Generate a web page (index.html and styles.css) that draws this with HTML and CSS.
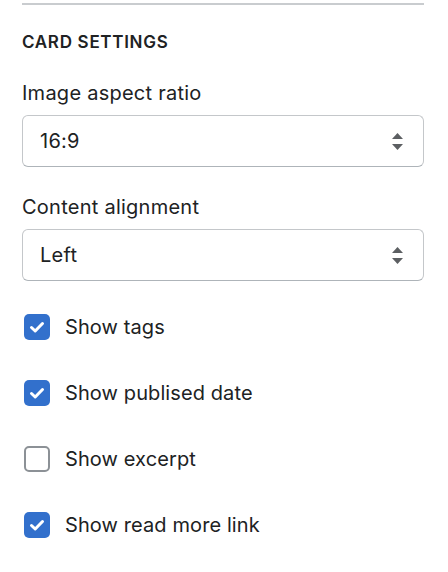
FILE: index.html
```html
<!DOCTYPE html>
<html lang="en">
<head>
<meta charset="utf-8">
<title>Card settings</title>
<link rel="stylesheet" href="styles.css">
</head>
<body>
<div class="panel">
  <div class="divider"></div>
  <h2 class="heading">Card settings</h2>

  <div class="field first">
    <div class="label">Image aspect ratio</div>
    <div class="select">
      <span class="value">16:9</span>
      <svg class="arrows" width="11" height="17" viewBox="0 0 11 17"><polygon points="5.5,0 11,6 0,6" /><polygon points="0,11 11,11 5.5,17" /></svg>
    </div>
  </div>

  <div class="field">
    <div class="label">Content alignment</div>
    <div class="select">
      <span class="value">Left</span>
      <svg class="arrows" width="11" height="17" viewBox="0 0 11 17"><polygon points="5.5,0 11,6 0,6" /><polygon points="0,11 11,11 5.5,17" /></svg>
    </div>
  </div>

  <div class="checks">
    <div class="check">
      <span class="box checked"><svg width="26" height="26" viewBox="0 0 26 26"><polyline points="7.5,13.5 11.2,17 18.5,9.5" /></svg></span>
      <span class="check-label">Show tags</span>
    </div>
    <div class="check">
      <span class="box checked"><svg width="26" height="26" viewBox="0 0 26 26"><polyline points="7.5,13.5 11.2,17 18.5,9.5" /></svg></span>
      <span class="check-label">Show publised date</span>
    </div>
    <div class="check">
      <span class="box"></span>
      <span class="check-label">Show excerpt</span>
    </div>
    <div class="check">
      <span class="box checked"><svg width="26" height="26" viewBox="0 0 26 26"><polyline points="7.5,13.5 11.2,17 18.5,9.5" /></svg></span>
      <span class="check-label">Show read more link</span>
    </div>
  </div>
</div>
</body>
</html>
```

FILE: styles.css
```css
html, body {
  margin: 0;
  padding: 0;
  background: #ffffff;
}

body {
  font-family: Inter, "Noto Sans", "Liberation Sans", sans-serif;
  color: #202223;
}

.panel {
  display: flex;
  flex-direction: column;
  padding: 3px 24px 0 22px;
}

.divider {
  height: 2px;
  background: #c9cccf;
}

.heading {
  margin: 25px 0 0 0;
  font-size: 17px;
  line-height: 24px;
  font-weight: 600;
  text-transform: uppercase;
  letter-spacing: 0.7px;
}

.field {
  display: flex;
  flex-direction: column;
  gap: 10px;
  margin-top: 28px;
}

.field.first {
  margin-top: 27px;
}

.label {
  font-size: 20px;
  line-height: 24px;
  letter-spacing: 0.25px;
}

.select {
  box-sizing: border-box;
  height: 52px;
  display: flex;
  align-items: center;
  justify-content: space-between;
  padding: 0 20px 0 17px;
  border: 1px solid #c4c7ca;
  border-bottom-color: #aeb4b9;
  border-radius: 6px;
  font-size: 20px;
  line-height: 24px;
  letter-spacing: 0.25px;
}

.arrows polygon {
  fill: #5c5f62;
}

.checks {
  display: flex;
  flex-direction: column;
  gap: 40px;
  margin-top: 33px;
}

.check {
  display: flex;
  align-items: center;
  gap: 15px;
  padding-left: 2px;
}

.box {
  box-sizing: border-box;
  width: 26px;
  height: 26px;
  border-radius: 5px;
  border: 2px solid #8c9196;
  flex: none;
  display: block;
}

.box.checked {
  border: none;
  background: #3270cc;
}

.box svg {
  display: block;
}

.box polyline {
  fill: none;
  stroke: #ffffff;
  stroke-width: 3;
  stroke-linecap: round;
  stroke-linejoin: round;
}

.check-label {
  font-size: 20px;
  line-height: 24px;
  letter-spacing: 0.1px;
}
```
